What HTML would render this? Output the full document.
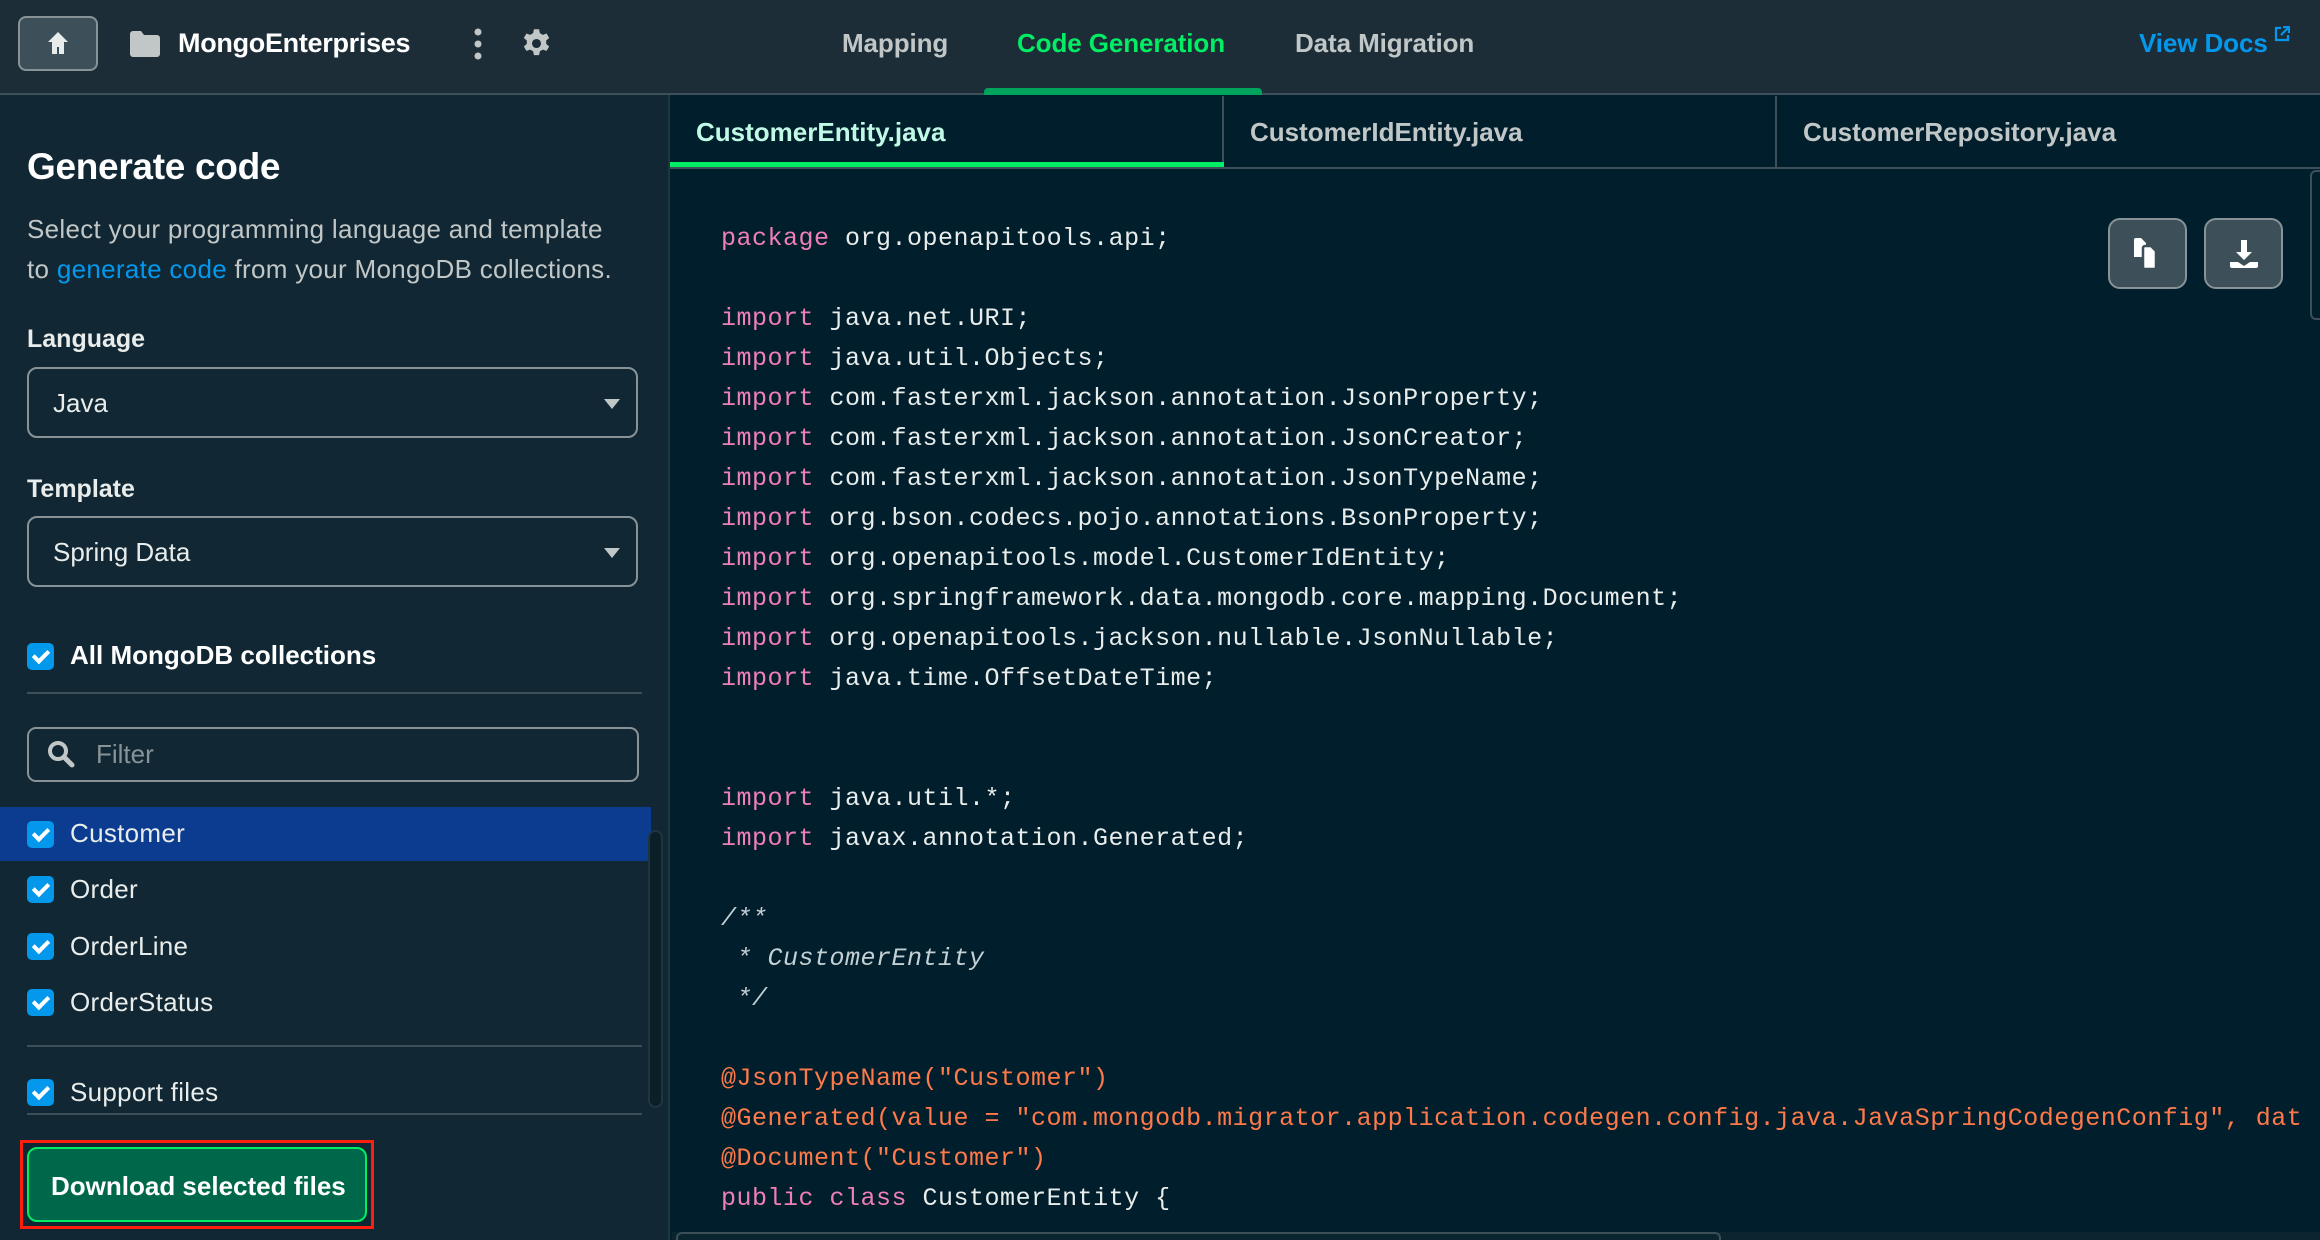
<!DOCTYPE html>
<html><head><meta charset="utf-8"><style>
*{box-sizing:border-box;margin:0;padding:0}
body{width:2320px;height:1240px;overflow:hidden;background:#001e2b;font-family:"Liberation Sans",sans-serif;position:relative;color:#e8edeb}
.a{position:absolute}
.hdr{left:0;top:0;width:2320px;height:95px;background:#1c2d38;border-bottom:2px solid #3d4f58}
.nav{top:28px;font-size:26px;font-weight:bold;color:#c1c7c6;letter-spacing:-0.1px}
.side{left:0;top:95px;width:670px;height:1145px;background:#112733;border-right:2px solid #1f3641}
.lbl{font-size:25px;font-weight:bold;color:#e8edeb;left:27px}
.sel{left:27px;width:611px;height:71px;border:2px solid #889397;border-radius:10px;font-size:26px;color:#e8edeb;padding:19px 0 0 24px}
.sel:after{content:"";position:absolute;right:16px;top:30px;border-left:8px solid transparent;border-right:8px solid transparent;border-top:10px solid #c1c7c6}
.cb{width:27px;height:27px;background:#0498ec;border-radius:5px}
.cb:after{content:"";position:absolute;left:9px;top:4px;width:6px;height:12px;border:solid #fff;border-width:0 4px 4px 0;transform:rotate(45deg)}
.item{font-size:26px;color:#e8edeb;left:70px;letter-spacing:0.3px}
.div{left:27px;width:615px;height:2px;background:#3d4f58}
.tab{top:96px;height:72px;border-right:2px solid #3d4f58;font-size:26px;font-weight:bold;color:#c1c7c6;padding:21px 0 0 26px;background:#001e2b}
pre{position:absolute;left:721px;top:219px;font-family:"Liberation Mono",monospace;font-size:25px;letter-spacing:0.5px;line-height:40px;color:#e8edeb}
.k{color:#f07eb8}.o{color:#ff7a4a}.c{font-style:italic;color:#c3d0d4}
.ib{width:79px;height:71px;background:#3d4f58;border:2px solid #889397;border-radius:12px}
</style></head><body>
<div class="a hdr"></div>
<div class="a" style="left:18px;top:16px;width:80px;height:55px;background:#3d4f58;border:2px solid #889397;border-radius:8px"></div>
<svg class="a" style="left:46px;top:30px" width="24" height="26" viewBox="0 0 24 26"><path d="M12 2L2 12h4v12h5v-7h2v7h5V12h4z" fill="#e8edeb"/></svg>
<svg class="a" style="left:130px;top:31px" width="30" height="26" viewBox="0 0 30 26"><path d="M0 3a3 3 0 0 1 3-3h8l3 4h13a3 3 0 0 1 3 3v16a3 3 0 0 1-3 3H3a3 3 0 0 1-3-3z" fill="#c1c7c6"/></svg>
<div class="a" style="left:178px;top:28px;font-size:27px;font-weight:bold;color:#fff;letter-spacing:-0.3px">MongoEnterprises</div>
<svg class="a" style="left:472px;top:28px" width="12" height="32"><circle cx="6" cy="4" r="3.5" fill="#c1c7c6"/><circle cx="6" cy="16" r="3.5" fill="#c1c7c6"/><circle cx="6" cy="28" r="3.5" fill="#c1c7c6"/></svg>
<svg class="a" style="left:521px;top:28px" width="31" height="31" viewBox="0 0 24 24"><path fill="#c1c7c6" fill-rule="evenodd" d="M10 1h4l.6 3 2.3 1.3 2.9-1 2 3.4-2.3 2v2.6l2.3 2-2 3.4-2.9-1-2.3 1.3-.6 3h-4l-.6-3-2.3-1.3-2.9 1-2-3.4 2.3-2v-2.6l-2.3-2 2-3.4 2.9 1L9.4 4zM12 8.5a3.5 3.5 0 1 0 0 7 3.5 3.5 0 0 0 0-7z"/></svg>
<div class="a nav" style="left:842px">Mapping</div>
<div class="a nav" style="left:1017px;color:#00ed64">Code Generation</div>
<div class="a" style="left:984px;top:88px;width:278px;height:7px;background:#00a35c;border-radius:4px 4px 0 0"></div>
<div class="a nav" style="left:1295px">Data Migration</div>
<div class="a nav" style="left:2139px;color:#0498ec">View Docs</div>
<svg class="a" style="left:2274px;top:26px" width="16" height="16" viewBox="0 0 16 16"><path d="M7 2H2v12h12V9M9 1h6v6M15 1L7 9" stroke="#0498ec" stroke-width="2.2" fill="none"/></svg>

<div class="a side"></div>
<div class="a" style="left:27px;top:146px;font-size:37px;font-weight:bold;color:#fff;letter-spacing:-0.3px">Generate code</div>
<div class="a" style="left:27px;top:209px;font-size:26px;line-height:40px;color:#c1c7c6;letter-spacing:0.3px;white-space:nowrap">Select your programming language and template<br>to <span style="color:#0498ec">generate code</span> from your MongoDB collections.</div>
<div class="a lbl" style="top:325px">Language</div>
<div class="a sel" style="top:367px">Java</div>
<div class="a lbl" style="top:475px">Template</div>
<div class="a sel" style="top:516px">Spring Data</div>
<div class="a cb" style="left:27px;top:643px"></div>
<div class="a item" style="top:640px;font-weight:bold;color:#fff;letter-spacing:0">All MongoDB collections</div>
<div class="a div" style="top:692px"></div>
<div class="a" style="left:27px;top:727px;width:612px;height:55px;border:2px solid #889397;border-radius:9px"></div>
<svg class="a" style="left:46px;top:739px" width="30" height="30" viewBox="0 0 30 30"><circle cx="12" cy="12" r="8" stroke="#c1c7c6" stroke-width="4" fill="none"/><path d="M18 18l8 8" stroke="#c1c7c6" stroke-width="5" stroke-linecap="round"/></svg>
<div class="a" style="left:96px;top:739px;font-size:26px;color:#889397">Filter</div>
<div class="a" style="left:0;top:807px;width:651px;height:54px;background:#0c3c8f"></div>
<div class="a cb" style="left:27px;top:821px"></div><div class="a item" style="top:818px">Customer</div>
<div class="a cb" style="left:27px;top:876px"></div><div class="a item" style="top:874px">Order</div>
<div class="a cb" style="left:27px;top:933px"></div><div class="a item" style="top:931px">OrderLine</div>
<div class="a cb" style="left:27px;top:989px"></div><div class="a item" style="top:987px">OrderStatus</div>
<div class="a div" style="top:1045px"></div>
<div class="a cb" style="left:27px;top:1079px"></div><div class="a item" style="top:1077px">Support files</div>
<div class="a div" style="top:1113px"></div>
<div class="a" style="left:648px;top:830px;width:15px;height:278px;border:2px solid #1f3641;border-radius:8px;background:#0b1f29"></div>
<div class="a" style="left:20px;top:1140px;width:354px;height:89px;border:3px solid #ff1f0f"></div>
<div class="a" style="left:27px;top:1147px;width:340px;height:75px;background:#00684a;border:2px solid #00ed64;border-radius:10px;color:#fff;font-size:26px;font-weight:bold;padding:22px 0 0 22px;letter-spacing:0;white-space:nowrap">Download selected files</div>

<div class="a tab" style="left:670px;width:554px;color:#c0fae6">CustomerEntity.java</div>
<div class="a" style="left:670px;top:162px;width:554px;height:5px;background:#00ed64"></div>
<div class="a tab" style="left:1224px;width:553px">CustomerIdEntity.java</div>
<div class="a tab" style="left:1777px;width:543px;border-right:0">CustomerRepository.java</div>
<div class="a" style="left:670px;top:167px;width:1650px;height:2px;background:#3d4f58"></div>
<pre><span class="k">package</span> org.openapitools.api;

<span class="k">import</span> java.net.URI;
<span class="k">import</span> java.util.Objects;
<span class="k">import</span> com.fasterxml.jackson.annotation.JsonProperty;
<span class="k">import</span> com.fasterxml.jackson.annotation.JsonCreator;
<span class="k">import</span> com.fasterxml.jackson.annotation.JsonTypeName;
<span class="k">import</span> org.bson.codecs.pojo.annotations.BsonProperty;
<span class="k">import</span> org.openapitools.model.CustomerIdEntity;
<span class="k">import</span> org.springframework.data.mongodb.core.mapping.Document;
<span class="k">import</span> org.openapitools.jackson.nullable.JsonNullable;
<span class="k">import</span> java.time.OffsetDateTime;


<span class="k">import</span> java.util.*;
<span class="k">import</span> javax.annotation.Generated;

<span class="c">/**
 * CustomerEntity
 */</span>

<span class="o">@JsonTypeName("Customer")</span>
<span class="o">@Generated(value = "com.mongodb.migrator.application.codegen.config.java.JavaSpringCodegenConfig", dat</span>
<span class="o">@Document("Customer")</span>
<span class="k">public</span> <span class="k">class</span> CustomerEntity {</pre>
<div class="a ib" style="left:2108px;top:218px"></div>
<svg class="a" style="left:2131px;top:237px" width="34" height="34" viewBox="0 0 34 34"><path d="M3 3a2 2 0 0 1 2-2h5l5 5v14H3z" fill="#fff"/><path d="M12 11a2 2 0 0 1 2-2h6l5 5v16a2 2 0 0 1-2 2h-9a2 2 0 0 1-2-2z" fill="#fff" stroke="#3d4f58" stroke-width="2.5"/></svg>
<div class="a ib" style="left:2204px;top:218px"></div>
<svg class="a" style="left:2228px;top:238px" width="32" height="32" viewBox="0 0 32 32"><path d="M13 2h6v12h5l-8 8-8-8h5z" fill="#fff"/><path d="M2 24h8l6 4 6-4h8v4a2 2 0 0 1-2 2H4a2 2 0 0 1-2-2z" fill="#fff"/></svg>
<div class="a" style="left:2310px;top:170px;width:10px;height:150px;border:2px solid #3d4f58;border-right:0;border-radius:6px 0 0 6px"></div>
<div class="a" style="left:672px;top:1232px;width:1648px;height:8px;background:#0b2530"></div>
<div class="a" style="left:676px;top:1232px;width:1045px;height:8px;border:2px solid #3d4f58;border-bottom:0;border-radius:6px 6px 0 0"></div>
</body></html>
